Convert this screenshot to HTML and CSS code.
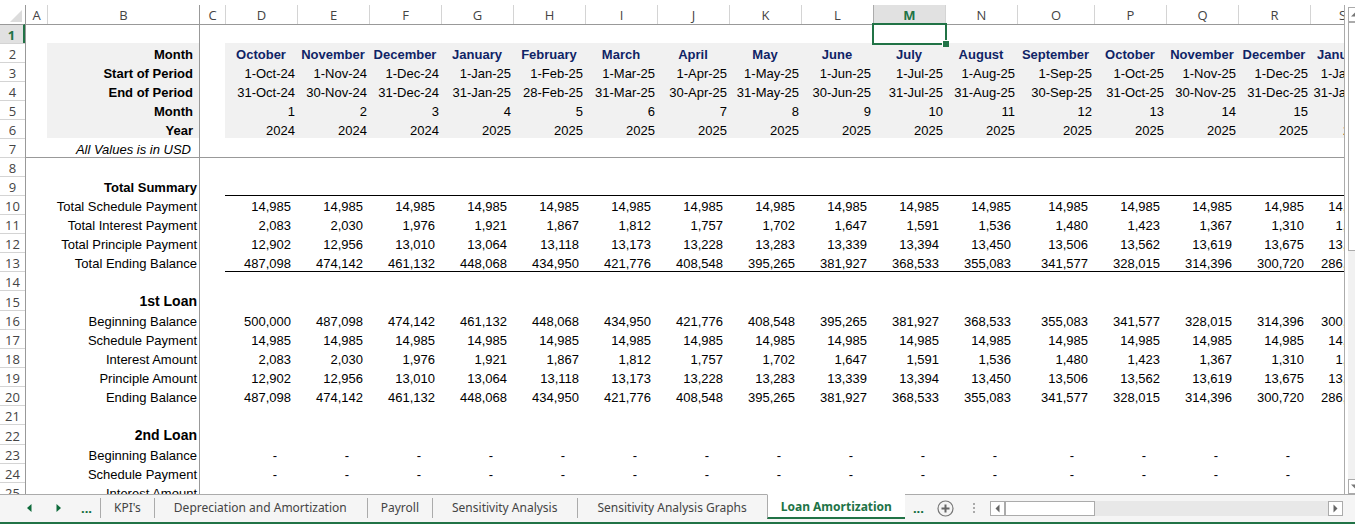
FILE: index.html
```html
<!DOCTYPE html>
<html lang="en">

<head>
    <meta charset="UTF-8">
    <meta name="viewport" content="width=device-width, initial-scale=1.0">
    <title>Loan Amortization</title>
    <link rel="stylesheet" href="styles.css">
</head>

<body>
    <div class="workbook">
        <main class="sheet-area">
            <div class="sheet">
                <table class="grid" id="grid">
                    <colgroup>
                        <col class="col-head">
                        <col class="col-a">
                        <col class="col-b">
                        <col class="col-c">
                        <col class="col-month" span="11">
                        <col class="col-wide">
                        <col class="col-month" span="3">
                        <col class="col-narrow">
                    </colgroup>
                    <thead id="gridHead"></thead>
                    <tbody id="gridBody"></tbody>
                </table>
            </div>
            <div class="v-scroll">
                <button class="scroll-btn" aria-label="Scroll up">
                    <svg width="9" height="9" viewBox="0 0 9 9"><path d="M0 6.5L4.5 2L9 6.5Z" fill="#777"/></svg>
                </button>
                <div class="v-thumb"></div>
                <div class="v-track"></div>
                <button class="scroll-btn" aria-label="Scroll down">
                    <svg width="9" height="9" viewBox="0 0 9 9"><path d="M0 2.5L4.5 7L9 2.5Z" fill="#777"/></svg>
                </button>
            </div>
        </main>

        <footer class="tab-bar">
            <div class="tab-nav">
                <button class="nav-btn" aria-label="Previous sheet">
                    <svg width="5" height="8" viewBox="0 0 5 8"><path d="M4.5 0V8L0 4Z" fill="#0e6b3b"/></svg>
                </button>
                <button class="nav-btn" aria-label="Next sheet">
                    <svg width="5" height="8" viewBox="0 0 5 8"><path d="M0.5 0V8L5 4Z" fill="#0e6b3b"/></svg>
                </button>
                <button class="nav-btn more">...</button>
            </div>
            <nav class="tabs">
                <button class="tab short">KPI's</button>
                <button class="tab">Depreciation and Amortization</button>
                <button class="tab short">Payroll</button>
                <button class="tab">Sensitivity Analysis</button>
                <button class="tab">Sensitivity Analysis Graphs</button>
                <button class="tab active"><span>Loan Amortization</span></button>
            </nav>
            <div class="tab-tools">
                <button class="nav-btn more">...</button>
                <button class="nav-btn" aria-label="New sheet">
                    <svg width="17" height="17" viewBox="0 0 17 17">
                        <circle cx="8.5" cy="8.5" r="7.5" fill="none" stroke="#777" stroke-width="1.2"/>
                        <path d="M8.5 4.5V12.5M4.5 8.5H12.5" stroke="#666" stroke-width="2"/>
                    </svg>
                </button>
                <svg width="2" height="10" viewBox="0 0 2 10"><path d="M0 0H2V2H0ZM0 4H2V6H0ZM0 8H2V10H0Z" fill="#aaa"/></svg>
            </div>
            <div class="scroll-pane">
                <div class="h-scroll">
                    <button class="scroll-btn" aria-label="Scroll left">
                        <svg width="9" height="9" viewBox="0 0 9 9"><path d="M6.5 0.5V8.5L2.5 4.5Z" fill="#666"/></svg>
                    </button>
                    <div class="h-thumb"></div>
                    <div class="h-track"></div>
                    <button class="scroll-btn" aria-label="Scroll right">
                        <svg width="9" height="9" viewBox="0 0 9 9"><path d="M2.5 0.5V8.5L6.5 4.5Z" fill="#666"/></svg>
                    </button>
                </div>
            </div>
        </footer>
    </div>

    <script src="script.js"></script>
</body>

</html>
```
FILE: styles.css
```css
* {
    box-sizing: border-box;
    margin: 0;
    padding: 0;
}

body {
    height: 100vh;
    overflow: hidden;
    background-color: #fff;
    color: #000;
    font-family: "Liberation Sans", Arial, sans-serif;
    font-size: 13px;
}

button {
    border: none;
    background: none;
    font: inherit;
    color: inherit;
    cursor: pointer;
}

svg {
    display: block;
}

.workbook {
    display: flex;
    flex-direction: column;
    height: 100%;
    border-bottom: 2px solid #217346;
}

.sheet-area {
    display: flex;
    flex: 1;
    min-height: 0;
    padding-top: 5px;
}

.sheet {
    flex: 1;
    min-width: 0;
    overflow: hidden;
    border-right: 1px solid #ababab;
}

/* Grid */
.grid {
    width: 0;
    table-layout: fixed;
    border-collapse: separate;
    border-spacing: 0;
    line-height: 15px;
    white-space: nowrap;
}

.col-head {
    width: 25px;
}

.col-a {
    width: 22px;
}

.col-b {
    width: 152px;
}

.col-c {
    width: 26px;
}

.col-month {
    width: 72px;
}

.col-wide {
    width: 77px;
}

.col-narrow {
    width: 64px;
}

.grid th {
    font-family: "Open Sans", "Segoe UI", sans-serif;
    font-weight: 400;
    color: #444;
    text-align: center;
}

.grid thead th {
    height: 19px;
    padding-top: 2px;
    line-height: 17px;
    border-left: 1px solid #d4d4d4;
}

.grid thead th.corner {
    border-left: none;
}

.corner svg {
    margin-left: 10px;
}

.grid thead th.edge {
    border-left-color: #999;
}

.grid tbody th {
    padding-top: 2px;
    line-height: 16px;
    border-top: 1px solid #d4d4d4;
}

.grid thead th.selected {
    background-color: #e1e1e1;
    border-left-color: #ababab;
    color: #217346;
    font-weight: 700;
}

.grid tbody th.selected {
    background-color: #e1e1e1;
    border-right: 2px solid #217346;
    color: #217346;
    font-weight: 700;
}

.grid td {
    padding-top: 3px;
    border-top: 1px solid transparent;
    padding-right: 2px;
    text-align: right;
}

.grid td.edge {
    border-top: none;
    border-left: 1px solid #999;
}

.grid tr.row-first > *,
.grid tr.row-frozen > td {
    border-top: 1px solid #999;
}

.grid tr.row-title > * {
    height: 20px;
    padding-top: 2px;
}

.grid td.shaded {
    background-color: #f1f1f1;
}

.grid td.ruled {
    border-top-color: #000;
}

.grid td.head-label {
    padding-right: 6px;
    font-weight: 700;
}

.grid td.note {
    padding-right: 8px;
    font-style: italic;
}

.grid td.section {
    font-weight: 700;
}

.grid tr.row-title td.section {
    font-size: 14px;
}

.grid td.month {
    padding-right: 0;
    color: #0f2466;
    font-weight: 700;
    text-align: center;
}

.grid td.amount {
    padding-right: 6px;
}

.grid td.empty-amount {
    padding-right: 20px;
}

.grid td.active-cell {
    position: relative;
}

.cell-outline {
    position: absolute;
    top: -2px;
    right: -2px;
    bottom: -2px;
    left: -1px;
    z-index: 1;
    border: 2px solid #217346;
}

.cell-outline::after {
    content: "";
    position: absolute;
    right: -4px;
    bottom: -4px;
    width: 6px;
    height: 6px;
    border-top: 1px solid #fff;
    border-left: 1px solid #fff;
    background-color: #217346;
}

/* Scroll bars */
.scroll-btn {
    display: flex;
    flex: none;
    align-items: center;
    justify-content: center;
    width: 15px;
    height: 15px;
    border: 1px solid #ababab;
    background-color: #fff;
}

.v-scroll {
    display: flex;
    flex-direction: column;
    width: 7px;
    margin-left: 3px;
    padding-top: 2px;
    overflow: hidden;
}

.v-thumb {
    flex: 228 0 0;
    width: 15px;
    border: 1px solid #ababab;
    background-color: #fff;
}

.v-track {
    flex: 229 0 0;
    width: 15px;
    background-color: #f1f1f1;
}

.scroll-pane {
    flex: 1;
    padding: 6px 12px 0 15px;
    border-top: 1px solid #ababab;
}

.h-scroll {
    display: flex;
}

.h-thumb {
    flex: 88 0 0;
    border: 1px solid #ababab;
    background-color: #fff;
}

.h-track {
    flex: 231 0 0;
    background-color: #e8e8e8;
}

/* Sheet tabs */
.tab-bar {
    display: flex;
    flex: none;
    height: 28px;
    background-color: #f5f5f5;
    color: #444;
    font-family: "Noto Sans", "Segoe UI", sans-serif;
    font-size: 12px;
}

.tab-nav,
.tab-tools {
    display: flex;
    align-items: center;
    height: 27px;
    border-top: 1px solid #ababab;
}

.tab-nav {
    gap: 24px;
    width: 100px;
    padding-left: 27px;
}

.tab-nav .more {
    margin-left: -4px;
}

.more {
    color: #0e6b3b;
    font-size: 13px;
    font-weight: 700;
}

.tabs {
    display: flex;
}

.tab {
    display: flex;
    align-items: center;
    height: 26px;
    padding-right: 20px;
    border-top: 1px solid #ababab;
    white-space: nowrap;
}

/* divider in front of each tab */
.tab::before {
    content: "";
    width: 1px;
    height: 20px;
    margin-right: 19px;
    background-color: #ababab;
}

.tab.short {
    padding-right: 13px;
}

.tab.short::before {
    margin-right: 13px;
}

.tab.active {
    height: 25px;
    padding: 0 13px 0 13px;
    border-top-color: #fff;
    border-bottom: 2px solid #217346;
    border-left: 1px solid #ababab;
    background-color: #fff;
    color: #217346;
    font-weight: 700;
}

.tab.active::before {
    display: none;
}

.tab-tools {
    gap: 13px;
    padding-left: 8px;
}

.tab-tools > svg {
    margin-left: 6px;
}
```
FILE: script.js
```js
const columns = 'ABCDEFGHIJKLMNOPQRS'.split('');
const monthNames = ['January', 'February', 'March', 'April', 'May', 'June', 'July',
    'August', 'September', 'October', 'November', 'December'];
const monthCount = 16;
const activeColumn = 'M';
const frozenColumn = 'C';

// One entry per month, October 2024 onwards
const months = Array.from({ length: monthCount }, (_, i) => {
    const index = (9 + i) % 12;
    const year = 2024 + Math.floor((9 + i) / 12);
    const lastDay = new Date(year, index + 1, 0).getDate();
    const suffix = '-' + monthNames[index].slice(0, 3) + '-' + (year % 100);
    return { name: monthNames[index], start: '1' + suffix, end: lastDay + suffix, year: year };
});

const ending = [487098, 474142, 461132, 448068, 434950, 421776, 408548, 395265,
    381927, 368533, 355083, 341577, 328015, 314396, 300720, 286988];
const interest = [2083, 2030, 1976, 1921, 1867, 1812, 1757, 1702,
    1647, 1591, 1536, 1480, 1423, 1367, 1310, 1253];
const principle = [12902, 12956, 13010, 13064, 13118, 13173, 13228, 13283,
    13339, 13394, 13450, 13506, 13562, 13619, 13675, 13732];
const beginning = [500000].concat(ending.slice(0, -1));
const payment = Array(monthCount).fill(14985);

const money = list => list.map(n => n.toLocaleString('en-US'));
const none = Array(monthCount).fill('-');

const rows = [
    { row: 'row-first' },
    { label: 'Month', type: 'head-label shaded', values: months.map(m => m.name), cell: 'month shaded' },
    { label: 'Start of Period', type: 'head-label shaded', values: months.map(m => m.start), cell: 'shaded' },
    { label: 'End of Period', type: 'head-label shaded', values: months.map(m => m.end), cell: 'shaded' },
    { label: 'Month', type: 'head-label shaded', values: months.map((m, i) => i + 1), cell: 'shaded' },
    { label: 'Year', type: 'head-label shaded', values: months.map(m => m.year), cell: 'shaded' },
    { label: 'All Values is in USD', type: 'note' },
    { row: 'row-frozen' },
    { label: 'Total Summary', type: 'section' },
    { label: 'Total Schedule Payment', values: money(payment), cell: 'amount ruled' },
    { label: 'Total Interest Payment', values: money(interest), cell: 'amount' },
    { label: 'Total Principle Payment', values: money(principle), cell: 'amount' },
    { label: 'Total Ending Balance', values: money(ending), cell: 'amount' },
    { cell: 'ruled' },
    { label: '1st Loan', type: 'section', row: 'row-title' },
    { label: 'Beginning Balance', values: money(beginning), cell: 'amount' },
    { label: 'Schedule Payment', values: money(payment), cell: 'amount' },
    { label: 'Interest Amount', values: money(interest), cell: 'amount' },
    { label: 'Principle Amount', values: money(principle), cell: 'amount' },
    { label: 'Ending Balance', values: money(ending), cell: 'amount' },
    {},
    { label: '2nd Loan', type: 'section', row: 'row-title' },
    { label: 'Beginning Balance', values: none, cell: 'empty-amount' },
    { label: 'Schedule Payment', values: none, cell: 'empty-amount' },
    { label: 'Interest Amount' }
];

const headCells = columns.map(name => {
    let cls = '';
    if (name === activeColumn) cls = 'selected';
    if (name === 'A' || name === frozenColumn) cls = 'edge';
    return `<th scope="col" class="${cls}">${name}</th>`;
});
const corner = '<th class="corner"><svg width="12" height="12" viewBox="0 0 12 12">' +
    '<path d="M12 0V12H0Z" fill="#dcdcdc"/></svg></th>';
document.getElementById('gridHead').innerHTML = `<tr>${corner}${headCells.join('')}</tr>`;

document.getElementById('gridBody').innerHTML = rows.map((row, r) => {
    let html = `<th scope="row" class="${r === 0 ? 'selected' : ''}">${r + 1}</th>`;
    html += '<td class="edge"></td>';
    html += `<td class="${row.type || ''}">${row.label || '&nbsp;'}</td>`;
    html += '<td class="edge"></td>';
    for (let i = 0; i < monthCount; i++) {
        const active = r === 0 && columns[i + 3] === activeColumn;
        const text = row.values ? row.values[i] : '';
        html += `<td class="${row.cell || ''}${active ? ' active-cell' : ''}">${text}` +
            `${active ? '<div class="cell-outline"></div>' : ''}</td>`;
    }
    return `<tr class="${row.row || ''}">${html}</tr>`;
}).join('');
```
